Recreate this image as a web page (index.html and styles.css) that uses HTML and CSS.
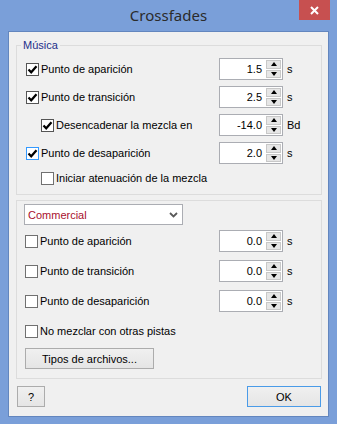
FILE: index.html
```html
<!DOCTYPE html>
<html lang="es">
<head>
    <meta charset="UTF-8">
    <title>Crossfades</title>
    <link rel="stylesheet" href="styles.css">
</head>
<body>
    <div class="window">
        <div class="titlebar">
            <span></span>
            <span class="title">Crossfades</span>
            <span class="close">
                <svg width="9" height="9" viewBox="0 0 9 9"><path d="M1 1 L8 8 M8 1 L1 8" stroke="#fff" stroke-width="2"/></svg>
            </span>
        </div>

        <div class="client">
            <div class="group group-music">
                <span class="legend">Música</span>
                <div class="rows">
                    <div class="row">
                        <label class="check"><span class="box"><svg width="11" height="11" viewBox="0 0 11 11"><path d="M1.5 5.5 L4.2 8.3 L9.5 2.2" stroke="#000" stroke-width="2.2" fill="none"/></svg></span>Punto de aparición</label>
                        <div class="spin"><span class="value">1.5</span><span class="spin-btns"><span class="up"></span><span class="down"></span></span></div>
                        <span class="unit">s</span>
                    </div>
                    <div class="row">
                        <label class="check"><span class="box"><svg width="11" height="11" viewBox="0 0 11 11"><path d="M1.5 5.5 L4.2 8.3 L9.5 2.2" stroke="#000" stroke-width="2.2" fill="none"/></svg></span>Punto de transición</label>
                        <div class="spin"><span class="value">2.5</span><span class="spin-btns"><span class="up"></span><span class="down"></span></span></div>
                        <span class="unit">s</span>
                    </div>
                    <div class="row">
                        <label class="check indent"><span class="box"><svg width="11" height="11" viewBox="0 0 11 11"><path d="M1.5 5.5 L4.2 8.3 L9.5 2.2" stroke="#000" stroke-width="2.2" fill="none"/></svg></span>Desencadenar la mezcla en</label>
                        <div class="spin"><span class="value">-14.0</span><span class="spin-btns"><span class="up"></span><span class="down"></span></span></div>
                        <span class="unit">Bd</span>
                    </div>
                    <div class="row">
                        <label class="check"><span class="box focus"><svg width="11" height="11" viewBox="0 0 11 11"><path d="M1.5 5.5 L4.2 8.3 L9.5 2.2" stroke="#000" stroke-width="2.2" fill="none"/></svg></span>Punto de desaparición</label>
                        <div class="spin"><span class="value">2.0</span><span class="spin-btns"><span class="up"></span><span class="down"></span></span></div>
                        <span class="unit">s</span>
                    </div>
                    <div class="row row-short">
                        <label class="check indent"><span class="box"></span>Iniciar atenuación de la mezcla</label>
                    </div>
                </div>
            </div>

            <div class="group group-commercial">
                <div class="select">
                    <span>Commercial</span>
                    <svg width="9" height="6" viewBox="0 0 9 6"><path d="M1 1 L4.5 4.5 L8 1" stroke="#5a5a5a" stroke-width="1.8" fill="none"/></svg>
                </div>
                <div class="rows rows-wide">
                    <div class="row">
                        <label class="check"><span class="box"></span>Punto de aparición</label>
                        <div class="spin"><span class="value">0.0</span><span class="spin-btns"><span class="up"></span><span class="down"></span></span></div>
                        <span class="unit">s</span>
                    </div>
                    <div class="row">
                        <label class="check"><span class="box"></span>Punto de transición</label>
                        <div class="spin"><span class="value">0.0</span><span class="spin-btns"><span class="up"></span><span class="down"></span></span></div>
                        <span class="unit">s</span>
                    </div>
                    <div class="row">
                        <label class="check"><span class="box"></span>Punto de desaparición</label>
                        <div class="spin"><span class="value">0.0</span><span class="spin-btns"><span class="up"></span><span class="down"></span></span></div>
                        <span class="unit">s</span>
                    </div>
                    <div class="row">
                        <label class="check"><span class="box"></span>No mezclar con otras pistas</label>
                    </div>
                </div>
                <button class="btn btn-types">Tipos de archivos...</button>
            </div>

            <div class="footer">
                <button class="btn btn-help">?</button>
                <button class="btn btn-ok">OK</button>
            </div>
        </div>
    </div>
</body>
</html>
```

FILE: styles.css
```css
body {
    margin: 0;
    font-family: "Liberation Sans", Arial, sans-serif;
    font-size: 11px;
    color: #000;
}
.window {
    width: 337px;
    height: 424px;
    box-sizing: border-box;
    background: #7a9fd9;
    padding: 0 8px 7px;
    display: flex;
    flex-direction: column;
}
.titlebar {
    height: 31px;
    flex-shrink: 0;
    display: grid;
    grid-template-columns: 1fr auto 1fr;
}
.title {
    font-family: "Noto Sans", "Open Sans", sans-serif;
    font-size: 15px;
    line-height: 30px;
    color: #2b2b2b;
}
.close {
    justify-self: end;
    width: 31px;
    height: 20px;
    margin-right: -1px;
    background: #c75050;
    display: flex;
    align-items: center;
    justify-content: center;
}
.client {
    flex: 1;
    background: #f0f0f0;
    border: 1px solid #6386be;
    display: flex;
    flex-direction: column;
}
.group {
    border: 1px solid #dcdcdc;
    margin: 0 6px 0 7px;
}
.group-music {
    margin-top: 13px;
    padding: 0 10px 8px 9px;
}
.legend {
    display: table;
    margin: -7px 0 0 -5px;
    padding: 0 2px;
    line-height: 13px;
    background: #f0f0f0;
    color: #1c2f8a;
}
.rows {
    display: flex;
    flex-direction: column;
    gap: 6px;
    margin-top: 6px;
}
.rows-wide {
    gap: 8px;
    margin-top: 5px;
}
.row {
    height: 22px;
    display: grid;
    grid-template-columns: 1fr 64px 24px;
    column-gap: 4px;
    align-items: center;
}
.row-short {
    height: 16px;
}
.check {
    display: flex;
    align-items: center;
    gap: 2px;
    white-space: nowrap;
}
.check.indent {
    margin-left: 15px;
}
.box {
    width: 13px;
    height: 13px;
    box-sizing: border-box;
    border: 1px solid #555;
    background: #fff;
    display: flex;
    align-items: center;
    justify-content: center;
}
.row .box:empty {
    border-color: #707070;
}
.box.focus {
    border-color: #3399ff;
}
.spin {
    height: 22px;
    box-sizing: border-box;
    border: 1px solid #abadb3;
    background: #fff;
    display: flex;
}
.spin .value {
    flex: 1;
    text-align: right;
    padding-right: 4px;
    line-height: 20px;
}
.spin-btns {
    width: 15px;
    margin: 1px 1px 1px 0;
    display: flex;
    flex-direction: column;
    gap: 1px;
}
.spin-btns span {
    flex: 1;
    box-sizing: border-box;
    border: 1px solid #c8c8c8;
    background: #e6e6e6;
    display: flex;
    align-items: center;
    justify-content: center;
}
.spin-btns span::before {
    content: "";
    border-left: 3.5px solid transparent;
    border-right: 3.5px solid transparent;
}
.spin-btns .up::before {
    border-bottom: 4px solid #000;
}
.spin-btns .down::before {
    border-top: 4px solid #000;
}
.unit {
    padding-left: 0;
}
.group-commercial {
    margin-top: 5px;
    padding: 3px 10px 9px 8px;
}
.select {
    width: 159px;
    height: 21px;
    box-sizing: border-box;
    margin-left: -1px;
    border: 1px solid #abadb3;
    background: #fff;
    color: #a8102e;
    padding: 0 4px 0 3px;
    display: flex;
    align-items: center;
    justify-content: space-between;
}
.btn {
    height: 21px;
    box-sizing: border-box;
    border: 1px solid #acacac;
    background: linear-gradient(#f0f0f0, #e5e5e5);
    font-family: inherit;
    font-size: 11px;
    color: #000;
    padding: 0;
}
.btn-types {
    width: 129px;
    margin-top: 6px;
}
.footer {
    display: flex;
    justify-content: space-between;
    margin: 7px 7px 0 8px;
}
.btn-help {
    width: 28px;
}
.btn-ok {
    width: 74px;
    border-color: #4a9be8;
}
```
